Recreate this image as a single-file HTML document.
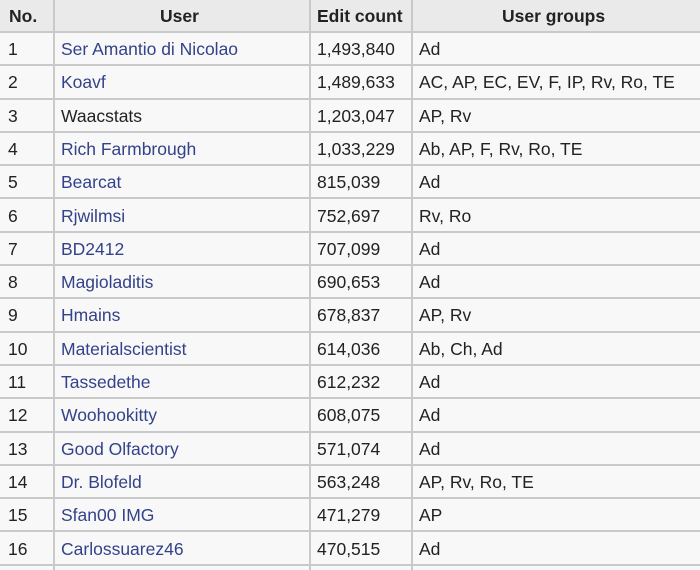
<!DOCTYPE html>
<html><head><meta charset="utf-8"><style>
body{margin:0;width:700px;height:570px;overflow:hidden;background:#f8f8f8;font-family:"Liberation Sans",Arial,sans-serif;font-size:17.5px;color:#222}
.r{position:absolute;left:0;width:700px;height:31.3px;border-bottom:2px solid #c9c9c9;background:#f8f8f8}
.h{background:#eaeaea;font-weight:bold;height:31px}
.c{position:absolute;top:0;height:100%;line-height:33px;white-space:nowrap}
.h .c{line-height:32px}
.v{position:absolute;top:0;width:2px;height:570px;background:#c9c9c9}
a{color:#33428a;text-decoration:none}
</style></head><body>
<div class="r h" style="top:0"><div class="c" style="left:9px">No.</div><div class="c" style="left:160px">User</div><div class="c" style="left:317px">Edit count</div><div class="c" style="left:502px">User groups</div></div>
<div id="rows"></div>
<script>
var d=[["Ser Amantio di Nicolao","1,493,840","Ad"],["Koavf","1,489,633","AC, AP, EC, EV, F, IP, Rv, Ro, TE"],["Waacstats","1,203,047","AP, Rv"],["Rich Farmbrough","1,033,229","Ab, AP, F, Rv, Ro, TE"],["Bearcat","815,039","Ad"],["Rjwilmsi","752,697","Rv, Ro"],["BD2412","707,099","Ad"],["Magioladitis","690,653","Ad"],["Hmains","678,837","AP, Rv"],["Materialscientist","614,036","Ab, Ch, Ad"],["Tassedethe","612,232","Ad"],["Woohookitty","608,075","Ad"],["Good Olfactory","571,074","Ad"],["Dr. Blofeld","563,248","AP, Rv, Ro, TE"],["Sfan00 IMG","471,279","AP"],["Carlossuarez46","470,515","Ad"]];
var h="";
for(var i=0;i<16;i++){var t=33+i*33.3;var u=i==2?d[i][0]:'<a>'+d[i][0]+'</a>';
h+='<div class="r" style="top:'+t+'px"><div class="c" style="left:8px">'+(i+1)+'</div><div class="c" style="left:61px">'+u+'</div><div class="c" style="left:317px">'+d[i][1]+'</div><div class="c" style="left:419px">'+d[i][2]+'</div></div>';}
h+='<div class="v" style="left:53px"></div><div class="v" style="left:309px"></div><div class="v" style="left:411px"></div>';
document.getElementById("rows").innerHTML=h;
</script>
</body></html>
